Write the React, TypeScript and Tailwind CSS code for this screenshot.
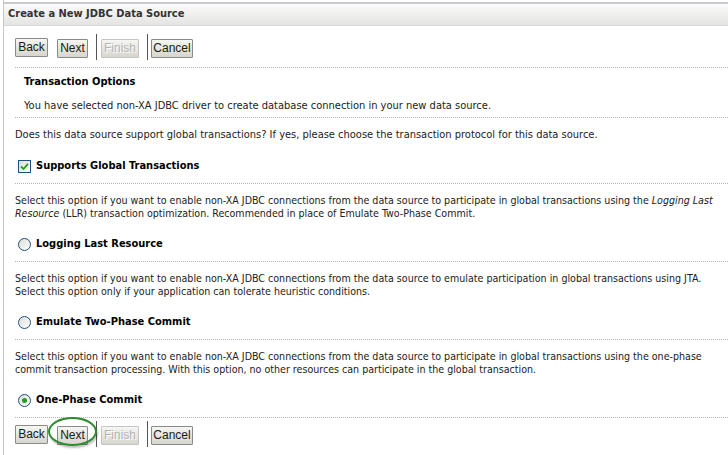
import React from "react";

const font = { fontFamily: '"DejaVu Sans Condensed", "DejaVu Sans", Verdana, sans-serif' };

const Btn = ({ label, w, disabled }: { label: string; w: string; disabled?: boolean }) => (
  <button
    disabled={disabled}
    className={`${w} h-[19px] text-[12px] leading-none border rounded-[1px] bg-gradient-to-b from-[#f6f6f2] to-[#d6d6ce] ${
      disabled
        ? "border-[#c4c4c4] text-[#b4b4b4] [text-shadow:1px_1px_0_#fff]"
        : "border-[#8a8a8a] text-[#1a1a1a]"
    }`}
    style={{ fontFamily: '"Liberation Sans", Arial, sans-serif' }}
  >
    {label}
  </button>
);

const Buttons = ({ circled }: { circled?: boolean }) => (
  <div className="flex items-center h-[26px]">
    <Btn label="Back" w="w-[33px]" />
    <div className="relative ml-[9px]">
      <Btn label="Next" w="w-[31px]" />
      {circled && (
        <div className="absolute left-[-9px] top-[-5px] w-[49px] h-[29px] rounded-[50%] border-2 border-[#2e8b2e] shadow-[1px_2px_2px_rgba(0,0,0,0.25)] pointer-events-none" />
      )}
    </div>
    <div className="w-px h-[26px] bg-[#555] ml-[8px]" />
    <div className="ml-[4px]">
      <Btn label="Finish" w="w-[38px]" disabled />
    </div>
    <div className="w-px h-[26px] bg-[#555] ml-[8px]" />
    <div className="ml-[3px]">
      <Btn label="Cancel" w="w-[42px]" />
    </div>
  </div>
);

const Dots = () => <div className="border-t border-dotted border-[#b4b4b4]" />;

const Radio = ({ checked }: { checked?: boolean }) => (
  <span className="w-[13px] h-[13px] rounded-full border border-[#1c5180] bg-gradient-to-br from-[#dcdcd6] to-white flex items-center justify-center">
    {checked && <span className="w-[5px] h-[5px] rounded-full bg-[#21a121]" />}
  </span>
);

const Check = () => (
  <span className="w-[13px] h-[13px] border border-[#1c5180] bg-gradient-to-br from-[#dcdcd6] to-white flex items-center justify-center">
    <svg width="9" height="9" viewBox="0 0 9 9">
      <path d="M1 4.5 L3.5 7 L8 1.8" fill="none" stroke="#21a121" strokeWidth="1.8" />
    </svg>
  </span>
);

const Option = ({ icon, label }: { icon: React.ReactNode; label: string }) => (
  <div className="flex items-center gap-[5px] pl-[3px] h-[34px]">
    {icon}
    <span className="font-bold text-[11px] text-black">{label}</span>
  </div>
);

const Para = ({ lines }: { lines: React.ReactNode[] }) => (
  <div className="text-[10.6px] leading-[13px] text-[#222] pt-[10px] pb-[7px]">
    {lines.map((l, i) => (
      <div key={i} className="whitespace-nowrap">
        {l}
      </div>
    ))}
  </div>
);

export default function App() {
  return (
    <div className="w-[728px] h-[455px] overflow-hidden bg-white" style={font}>
      <div className="ml-[3px] h-full border-l border-[#c5c5c5] pt-[2px]">
        <div className="h-[24px] border-t-2 border-[#c8ccd0] border-b border-b-[#d8d8d8] bg-gradient-to-b from-[#fbfbfb] to-[#e4e4e2] flex items-center pl-[4px]">
          <span className="font-bold text-[11px] text-[#333]">Create a New JDBC Data Source</span>
        </div>
        <div className="pl-[11px] pt-[8px]">
          <Buttons />
          <div className="mt-[7px]">
            <Dots />
          </div>
          <div className="pl-[9px] pt-[7px] pb-[4px] leading-[14px]">
            <div className="font-bold text-[11px] text-black">Transaction Options</div>
            <div className="text-[11px] text-[#222] mt-[10px]">
              You have selected non-XA JDBC driver to create database connection in your new data source.
            </div>
          </div>
          <Dots />
          <div className="text-[11px] leading-[14px] text-[#222] pt-[10px]">
            Does this data source support global transactions? If yes, please choose the transaction protocol for this data source.
          </div>
          <div className="mt-[7px]">
            <Option icon={<Check />} label="Supports Global Transactions" />
          </div>
          <Dots />
          <Para
            lines={[
              <>
                Select this option if you want to enable non-XA JDBC connections from the data source to participate in global transactions using the <i>Logging Last</i>
              </>,
              <>
                <i>Resource</i> (LLR) transaction optimization. Recommended in place of Emulate Two-Phase Commit.
              </>,
            ]}
          />
          <Option icon={<Radio />} label="Logging Last Resource" />
          <Dots />
          <Para
            lines={[
              "Select this option if you want to enable non-XA JDBC connections from the data source to emulate participation in global transactions using JTA.",
              "Select this option only if your application can tolerate heuristic conditions.",
            ]}
          />
          <Option icon={<Radio />} label="Emulate Two-Phase Commit" />
          <Dots />
          <Para
            lines={[
              "Select this option if you want to enable non-XA JDBC connections from the data source to participate in global transactions using the one-phase",
              "commit transaction processing. With this option, no other resources can participate in the global transaction.",
            ]}
          />
          <Option icon={<Radio checked />} label="One-Phase Commit" />
          <Dots />
          <div className="pt-[3px]">
            <Buttons circled />
          </div>
        </div>
      </div>
    </div>
  );
}
